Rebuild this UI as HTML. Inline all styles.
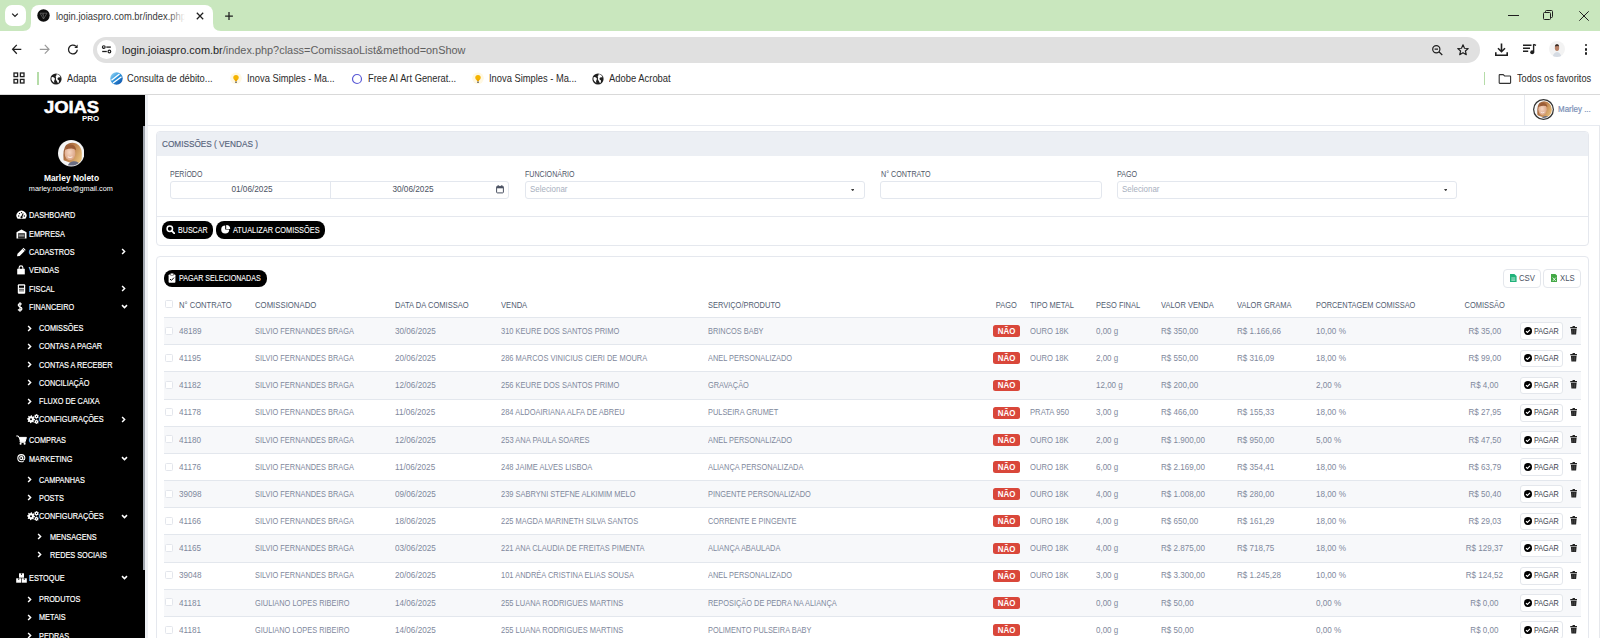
<!DOCTYPE html><html><head><meta charset="utf-8"><title>Comissões</title><style>
*{margin:0;padding:0;box-sizing:border-box}
html,body{width:1600px;height:638px;overflow:hidden;background:#fff;font-family:"Liberation Sans",sans-serif;position:relative}
.a{position:absolute}
.t{position:absolute;white-space:nowrap;line-height:1}
.inp{position:absolute;border:1px solid #e3e7ee;border-radius:3px;background:#fff}
.btn{position:absolute;background:#000;border-radius:8px}
.cb{position:absolute;width:8px;height:8px;border:1px solid #e3e6ec;border-radius:1.5px;background:#fff}
.badge{position:absolute;width:27px;height:11.8px;background:#d9473a;border-radius:2.5px}
.pg{position:absolute;width:43px;height:18px;border:1px solid #e4e7ec;border-radius:3px;background:#fff}
</style></head><body>
<div class="a" style="left:0;top:0;width:1600px;height:31px;background:#c9e7be"></div>
<div class="a" style="left:5px;top:5px;width:21px;height:21px;background:#fff;border-radius:7px"></div>
<svg class="a" style="left:10px;top:11px" width="10" height="8" viewBox="0 0 10 8"><path d="M2.2 2.6 L5 5.4 L7.8 2.6" fill="none" stroke="#1f1f1f" stroke-width="1.3"/></svg>
<div class="a" style="left:31px;top:5px;width:182px;height:27px;background:#fff;border-radius:8px 8px 0 0"></div>
<svg class="a" style="left:23px;top:23px" width="8" height="8"><path d="M0 8 Q8 8 8 0 L8 8 Z" fill="#fff"/></svg>
<svg class="a" style="left:213px;top:23px" width="8" height="8"><path d="M8 8 Q0 8 0 0 L0 8 Z" fill="#fff"/></svg>
<svg class="a" style="left:36.8px;top:9px" width="13" height="13" viewBox="0 0 13 13"><circle cx="6.5" cy="6.5" r="6.2" fill="#0d0d0d"/><path d="M3 4.2 H10 L6.5 10 Z" fill="none" stroke="#6b6b6b" stroke-width="0.7"/><path d="M6.5 4.2 V10 M4.8 4.2 L6.5 7" stroke="#6b6b6b" stroke-width="0.5"/></svg>
<div class="t" style="left:56.00px;top:12px;font-size:10.2px;color:#3a3a3a;transform:scaleX(0.922);transform-origin:0 0;">login.joiaspro.com.br/index.php</div>
<div class="a" style="left:168px;top:8px;width:20px;height:20px;background:linear-gradient(to right,rgba(255,255,255,0),#fff 85%)"></div>
<svg class="a" style="left:195px;top:10.7px" width="10" height="10" viewBox="0 0 10 10"><path d="M1.8 1.8 L8.2 8.2 M8.2 1.8 L1.8 8.2" stroke="#1f1f1f" stroke-width="1.25"/></svg>
<svg class="a" style="left:222.8px;top:9.9px" width="12" height="12" viewBox="0 0 12 12"><path d="M6 2.1 V9.9 M2.1 6 H9.9" stroke="#1f1f1f" stroke-width="1.25"/></svg>
<div class="a" style="left:1508px;top:14.5px;width:11px;height:1px;background:#1f1f1f"></div>
<svg class="a" style="left:1542px;top:9px" width="12" height="12" viewBox="0 0 12 12"><rect x="1.5" y="3.5" width="7" height="7" rx="1" fill="none" stroke="#1f1f1f" stroke-width="1"/><path d="M3.5 3.5 V2.5 Q3.5 1.5 4.5 1.5 H9.5 Q10.5 1.5 10.5 2.5 V7.5 Q10.5 8.5 9.5 8.5 H8.5" fill="none" stroke="#1f1f1f" stroke-width="1"/></svg>
<svg class="a" style="left:1578px;top:9.5px" width="12" height="12" viewBox="0 0 12 12"><path d="M1.3 1.3 L10.7 10.7 M10.7 1.3 L1.3 10.7" stroke="#1f1f1f" stroke-width="1"/></svg>
<div class="a" style="left:0;top:31px;width:1600px;height:32px;background:#fff;border-radius:6px 0 0 0"></div>
<svg class="a" style="left:10px;top:42px" width="14" height="14" viewBox="0 0 14 14"><path d="M11.3 7.3 H2.6 M6.8 2.9 L2.6 7.3 L6.8 11.7" fill="none" stroke="#1f1f1f" stroke-width="1.25"/></svg>
<svg class="a" style="left:38px;top:42px" width="14" height="14" viewBox="0 0 14 14"><path d="M1.8 7.3 H10.8 M6.8 2.9 L11 7.3 L6.8 11.7" fill="none" stroke="#9a9a9a" stroke-width="1.2"/></svg>
<svg class="a" style="left:66px;top:42px" width="14" height="14" viewBox="0 0 14 14"><path d="M11.3 7.8 A4.4 4.4 0 1 1 9.9 4.3" fill="none" stroke="#1f1f1f" stroke-width="1.3"/><path d="M11.6 2.6 V5.9 H8.3 Z" fill="#1f1f1f"/></svg>
<div class="a" style="left:93.2px;top:36.5px;width:1387.3px;height:26px;background:#e0e0e0;border-radius:13px"></div>
<div class="a" style="left:97.2px;top:40.2px;width:18.6px;height:18.6px;background:#fff;border-radius:50%"></div>
<svg class="a" style="left:100px;top:43px" width="13" height="13" viewBox="0 0 13 13"><circle cx="3.8" cy="4.1" r="1.35" fill="none" stroke="#1f1f1f" stroke-width="1.2"/><path d="M6.3 4.1 H10.8" stroke="#1f1f1f" stroke-width="1.3"/><path d="M2.2 8.5 H6.8" stroke="#1f1f1f" stroke-width="1.3"/><circle cx="9.4" cy="8.5" r="1.35" fill="none" stroke="#1f1f1f" stroke-width="1.2"/></svg>
<div class="t" style="left:122.4px;top:43.6px;font-size:11.7px;color:#5f5f5f;transform:scaleX(0.934);transform-origin:0 0"><span style="color:#1f1f1f">login.joiaspro.com.br</span>/index.php?class=ComissaoList&amp;method=onShow</div>
<svg class="a" style="left:1430px;top:42px" width="14" height="14" viewBox="0 0 14 14"><circle cx="6.3" cy="7.2" r="3.6" fill="none" stroke="#1f1f1f" stroke-width="1.2"/><path d="M8.9 9.8 L12.3 13 M4.6 7.2 H8" stroke="#1f1f1f" stroke-width="1.2"/></svg>
<svg class="a" style="left:1455.5px;top:43px" width="14" height="14" viewBox="0 0 14 14"><path d="M7 1.8 L8.5 5.2 L12.2 5.5 L9.4 8 L10.3 11.7 L7 9.7 L3.7 11.7 L4.6 8 L1.8 5.5 L5.5 5.2 Z" fill="none" stroke="#1f1f1f" stroke-width="1.15" stroke-linejoin="round"/></svg>
<svg class="a" style="left:1494px;top:41.5px" width="15" height="15" viewBox="0 0 15 15"><path d="M7.5 1.5 V9.5 M4 6.2 L7.5 9.7 L11 6.2" fill="none" stroke="#1f1f1f" stroke-width="1.6"/><path d="M1.8 10.2 V13.2 H13.2 V10.2" fill="none" stroke="#1f1f1f" stroke-width="1.6"/></svg>
<svg class="a" style="left:1522px;top:42px" width="15" height="14" viewBox="0 0 15 14"><path d="M1 3.2 H9.5 M1 6.2 H8 M1 9.2 H6.2" stroke="#1f1f1f" stroke-width="1.4"/><path d="M11.6 2.2 V10" stroke="#1f1f1f" stroke-width="1.4"/><circle cx="10.2" cy="10.3" r="2" fill="#1f1f1f"/><path d="M11.6 2.4 L14 3.4" stroke="#1f1f1f" stroke-width="1.4"/></svg>
<svg class="a" style="left:1549px;top:41px" width="16" height="16" viewBox="0 0 16 16"><defs><clipPath id="pc"><circle cx="8" cy="8" r="8"/></clipPath></defs><g clip-path="url(#pc)"><rect width="16" height="16" fill="#f3f3f3"/><path d="M3.5 17 Q4 11.5 8 11 Q12 11.5 12.5 17 Z" fill="#d5dbe3"/><ellipse cx="8" cy="7" rx="2.2" ry="3" fill="#b98268"/><path d="M5.8 5.6 Q6 3 8 3 Q10 3 10.2 5.6 Q9 4.6 5.8 5.6 Z" fill="#3a2a22"/></g></svg>
<div class="a" style="left:1584.5500000000002px;top:43.75px;width:2.7px;height:2.7px;border-radius:50%;background:#1f1f1f"></div>
<div class="a" style="left:1584.5500000000002px;top:48.05px;width:2.7px;height:2.7px;border-radius:50%;background:#1f1f1f"></div>
<div class="a" style="left:1584.5500000000002px;top:52.35px;width:2.7px;height:2.7px;border-radius:50%;background:#1f1f1f"></div>
<div class="a" style="left:0;top:63px;width:1600px;height:31px;background:#fff"></div>
<div class="a" style="left:0;top:94px;width:1600px;height:1px;background:#d9d9d9"></div>
<svg class="a" style="left:13px;top:72px" width="12" height="12" viewBox="0 0 12 12"><g fill="none" stroke="#1f1f1f" stroke-width="1.3"><rect x="1" y="1" width="3.6" height="3.6"/><rect x="7.4" y="1" width="3.6" height="3.6"/><rect x="1" y="7.4" width="3.6" height="3.6"/><rect x="7.4" y="7.4" width="3.6" height="3.6"/></g></svg>
<div class="a" style="left:37.3px;top:72px;width:1.4px;height:12.5px;background:#b5dca8"></div>
<svg class="a" style="left:50px;top:72.5px" width="12" height="12" viewBox="0 0 12 12"><circle cx="6" cy="6" r="5.6" fill="#1f1f1f"/><path d="M1.6 4.2 Q3.2 3.8 4.6 5 Q5.4 6 4.4 7.2 Q3.8 8.2 4.3 10 Q2 8.8 1.4 6.2 Z" fill="#fff"/><path d="M6.8 1.1 Q9.6 1.6 10.6 4.2 Q9.2 4 8.2 4.6 Q7.2 5.2 7.6 6.4 Q8.6 6.6 9 7.6 Q9.2 9 8.2 10.3 Q7.2 9.4 7 8.2 Q6.2 7.4 5.8 6 Q6.6 4.8 5.6 3.8 Q6.4 2.6 6.8 1.1 Z" fill="#fff"/></svg>
<div class="t" style="left:66.80px;top:74px;font-size:10.3px;color:#2b2b2b;transform:scaleX(0.903);transform-origin:0 0;">Adapta</div>
<svg class="a" style="left:109.5px;top:72px" width="13" height="13" viewBox="0 0 13 13"><defs><linearGradient id="cg" x1="0" y1="0" x2="1" y2="1"><stop offset="0" stop-color="#a8e2fa"/><stop offset="0.5" stop-color="#2a8fd8"/><stop offset="1" stop-color="#0d47a1"/></linearGradient></defs><circle cx="6.5" cy="6.5" r="6.2" fill="url(#cg)"/><path d="M1.5 8.2 L9.5 2 M3 11 L11.5 4.8" stroke="#fff" stroke-width="1.4"/></svg>
<div class="t" style="left:126.90px;top:74px;font-size:10.3px;color:#2b2b2b;transform:scaleX(0.906);transform-origin:0 0;">Consulta de débito...</div>
<svg class="a" style="left:230px;top:72px" width="12" height="13" viewBox="0 0 12 13"><circle cx="6" cy="6.3" r="5.8" fill="#fff8e3"/><circle cx="6" cy="5.6" r="2.7" fill="#f5b400"/><path d="M4.6 7 H7.4 L7 9.3 H5 Z" fill="#f0a800"/><rect x="5" y="9.6" width="2" height="1.2" fill="#666"/></svg>
<div class="t" style="left:247.00px;top:74px;font-size:10.3px;color:#2b2b2b;transform:scaleX(0.906);transform-origin:0 0;">Inova Simples - Ma...</div>
<svg class="a" style="left:351px;top:72.5px" width="12" height="12" viewBox="0 0 12 12"><circle cx="6" cy="6" r="4.5" fill="none" stroke="#5b5bd6" stroke-width="1.2"/></svg>
<div class="t" style="left:368.00px;top:74px;font-size:10.3px;color:#2b2b2b;transform:scaleX(0.906);transform-origin:0 0;">Free AI Art Generat...</div>
<svg class="a" style="left:472px;top:72px" width="12" height="13" viewBox="0 0 12 13"><circle cx="6" cy="6.3" r="5.8" fill="#fff8e3"/><circle cx="6" cy="5.6" r="2.7" fill="#f5b400"/><path d="M4.6 7 H7.4 L7 9.3 H5 Z" fill="#f0a800"/><rect x="5" y="9.6" width="2" height="1.2" fill="#666"/></svg>
<div class="t" style="left:489.00px;top:74px;font-size:10.3px;color:#2b2b2b;transform:scaleX(0.906);transform-origin:0 0;">Inova Simples - Ma...</div>
<svg class="a" style="left:592px;top:72.5px" width="12" height="12" viewBox="0 0 12 12"><circle cx="6" cy="6" r="5.6" fill="#1f1f1f"/><path d="M1.6 4.2 Q3.2 3.8 4.6 5 Q5.4 6 4.4 7.2 Q3.8 8.2 4.3 10 Q2 8.8 1.4 6.2 Z" fill="#fff"/><path d="M6.8 1.1 Q9.6 1.6 10.6 4.2 Q9.2 4 8.2 4.6 Q7.2 5.2 7.6 6.4 Q8.6 6.6 9 7.6 Q9.2 9 8.2 10.3 Q7.2 9.4 7 8.2 Q6.2 7.4 5.8 6 Q6.6 4.8 5.6 3.8 Q6.4 2.6 6.8 1.1 Z" fill="#fff"/></svg>
<div class="t" style="left:609.00px;top:74px;font-size:10.3px;color:#2b2b2b;transform:scaleX(0.913);transform-origin:0 0;">Adobe Acrobat</div>
<div class="a" style="left:1484px;top:72px;width:1.4px;height:12.5px;background:#b5dca8"></div>
<svg class="a" style="left:1497.5px;top:73px" width="14" height="12" viewBox="0 0 14 12"><path d="M1.8 1.6 H5.2 L6.6 3 H12 Q12.6 3 12.6 3.6 V9.8 Q12.6 10.4 12 10.4 H1.8 Q1.2 10.4 1.2 9.8 V2.2 Q1.2 1.6 1.8 1.6 Z" fill="none" stroke="#333" stroke-width="1.1"/></svg>
<div class="t" style="left:1517.00px;top:74px;font-size:10.3px;color:#2b2b2b;transform:scaleX(0.893);transform-origin:0 0;">Todos os favoritos</div>
<div class="a" style="left:0;top:95px;width:145px;height:543px;background:#000"></div>
<div class="a" style="left:143px;top:126px;width:2.4px;height:444px;background:#a3a8b0"></div>
<div class="a" style="left:145px;top:95px;width:2.5px;height:543px;background:#eef0f4"></div>
<div class="t" style="left:43.8px;top:100px;font-size:15.8px;font-weight:bold;color:#fff;transform:scaleX(1.17);transform-origin:0 0;letter-spacing:-0.1px;-webkit-text-stroke:0.45px #fff">JOIAS</div>
<div class="t" style="left:82.40px;top:115px;font-size:7.8px;color:#fff;font-weight:bold;transform:scaleX(1.013);transform-origin:0 0;">PRO</div>
<svg class="a" style="left:58.099999999999994px;top:140.3px" width="26.4" height="26.4" viewBox="0 0 26 26"><defs><clipPath id="fcs"><circle cx="13" cy="13" r="12.2"/></clipPath><linearGradient id="hgs" x1="0" y1="0" x2="1" y2="0.6"><stop offset="0" stop-color="#8a4f2e"/><stop offset="0.45" stop-color="#b87a48"/><stop offset="1" stop-color="#e6bd7a"/></linearGradient><radialGradient id="sks" cx="0.45" cy="0.45" r="0.6"><stop offset="0" stop-color="#f6d6c2"/><stop offset="1" stop-color="#d9a283"/></radialGradient></defs><circle cx="13" cy="13" r="13" fill="#e8e8e8"/><circle cx="13" cy="13" r="12.2" fill="#fff"/><g clip-path="url(#fcs)"><rect width="26" height="26" fill="#f5f5f5"/><path d="M5.5 20 Q4.5 9 8 5 Q12.5 1.5 18 3.5 Q23.5 6.5 23.5 13 Q24 19 22 24 L16 24 Z" fill="url(#hgs)"/><ellipse cx="11.8" cy="12.8" rx="5.3" ry="7.2" fill="url(#sks)"/><path d="M7 9.5 Q8.5 4.5 13.5 4.8 Q17.5 5.5 17.8 10 Q15 7 7 9.5 Z" fill="#9b5c36"/><path d="M9.6 16.3 Q11.8 18 14.2 16.3" stroke="#fbeee6" stroke-width="1" fill="none"/><path d="M9 27 Q10.5 21.5 15 21 Q21 20.5 23.5 27 Z" fill="#6a6d82"/></g></svg>
<div class="t" style="left:42.98px;top:174px;font-size:8.7px;color:#fff;font-weight:bold;transform:scaleX(0.968);transform-origin:50% 0;">Marley Noleto</div>
<div class="t" style="left:26.15px;top:185px;font-size:7.8px;color:#fff;transform:scaleX(0.936);transform-origin:50% 0;">marley.noleto@gmail.com</div>
<svg class="a" style="left:15.5px;top:210.3px" width="11" height="10" viewBox="0 0 11 10"><path d="M1.6 8.8 A5 5 0 1 1 9.4 8.8 Z" fill="#fff"/><path d="M5.5 7.2 L7.2 3.4" stroke="#000" stroke-width="1.1"/><circle cx="2.7" cy="6" r="0.7" fill="#000"/><circle cx="3.5" cy="3.6" r="0.7" fill="#000"/><circle cx="5.5" cy="2.6" r="0.7" fill="#000"/><circle cx="8.3" cy="6" r="0.7" fill="#000"/><circle cx="5.5" cy="7.3" r="1.1" fill="#000"/></svg>
<div class="t" style="left:28.60px;top:211px;font-size:8.6px;color:#fff;transform:scaleX(0.851);transform-origin:0 0;-webkit-text-stroke:0.18px #fff">DASHBOARD</div>
<svg class="a" style="left:15.5px;top:228.5px" width="11" height="10" viewBox="0 0 11 10"><path d="M0.5 3.2 L5.5 0.6 L10.5 3.2 V9.5 H0.5 Z" fill="#fff"/><rect x="2.2" y="4.2" width="6.6" height="5.3" fill="#000"/><path d="M2.6 5.2 H8.4 M2.6 6.5 H8.4 M2.6 7.8 H8.4" stroke="#c8c8c8" stroke-width="0.7"/></svg>
<div class="t" style="left:28.60px;top:230px;font-size:8.6px;color:#fff;transform:scaleX(0.851);transform-origin:0 0;-webkit-text-stroke:0.18px #fff">EMPRESA</div>
<svg class="a" style="left:15.5px;top:246.8px" width="11" height="10" viewBox="0 0 11 10"><path d="M1 9.3 L1.5 6.8 L7.5 0.8 L9.7 3 L3.7 9 Z" fill="#fff"/><path d="M6.6 1.7 L8.8 3.9" stroke="#000" stroke-width="0.6"/></svg>
<div class="t" style="left:28.60px;top:248px;font-size:8.6px;color:#fff;transform:scaleX(0.851);transform-origin:0 0;-webkit-text-stroke:0.18px #fff">CADASTROS</div>
<svg class="a" style="left:121.2px;top:248.3px" width="5" height="7" viewBox="0 0 5 7"><path d="M1.1 1 L3.6 3.5 L1.1 6" fill="none" stroke="#fff" stroke-width="1.5"/></svg>
<svg class="a" style="left:15.5px;top:265.1px" width="11" height="10" viewBox="0 0 11 10"><path d="M1.2 3.8 H8.8 V9.4 H1.2 Z" fill="#fff"/><path d="M3.1 4.5 V2.8 A1.9 1.9 0 0 1 6.9 2.8 V4.5" fill="none" stroke="#fff" stroke-width="1.1"/></svg>
<div class="t" style="left:28.60px;top:266px;font-size:8.6px;color:#fff;transform:scaleX(0.851);transform-origin:0 0;-webkit-text-stroke:0.18px #fff">VENDAS</div>
<svg class="a" style="left:15.5px;top:283.5px" width="11" height="10" viewBox="0 0 11 10"><rect x="1.8" y="0.3" width="7.4" height="9.4" rx="1" fill="#fff"/><rect x="3" y="1.6" width="5" height="2.2" fill="#000"/><path d="M3 5.3 H8 M3 6.9 H8" stroke="#000" stroke-width="0.7"/></svg>
<div class="t" style="left:28.60px;top:285px;font-size:8.6px;color:#fff;transform:scaleX(0.851);transform-origin:0 0;-webkit-text-stroke:0.18px #fff">FISCAL</div>
<svg class="a" style="left:121.2px;top:285.0px" width="5" height="7" viewBox="0 0 5 7"><path d="M1.1 1 L3.6 3.5 L1.1 6" fill="none" stroke="#fff" stroke-width="1.5"/></svg>
<svg class="a" style="left:15.5px;top:301.7px" width="11" height="10" viewBox="0 0 11 10"><path d="M5.6 2.4 Q5.1 1.7 4 1.7 Q2.2 1.8 2.3 3.3 Q2.4 4.5 4 4.9 Q5.9 5.4 5.9 6.9 Q5.8 8.4 4 8.4 Q2.8 8.4 2 7.5 M4 0.3 V9.7" fill="none" stroke="#fff" stroke-width="1.25"/></svg>
<div class="t" style="left:28.60px;top:303px;font-size:8.6px;color:#fff;transform:scaleX(0.851);transform-origin:0 0;-webkit-text-stroke:0.18px #fff">FINANCEIRO</div>
<svg class="a" style="left:120.5px;top:304.2px" width="7" height="5" viewBox="0 0 7 5"><path d="M1 1.1 L3.5 3.6 L6 1.1" fill="none" stroke="#fff" stroke-width="1.5"/></svg>
<svg class="a" style="left:27.3px;top:324.5px" width="5" height="7" viewBox="0 0 5 7"><path d="M1.1 1 L3.6 3.5 L1.1 6" fill="none" stroke="#fff" stroke-width="1.5"/></svg>
<div class="t" style="left:38.80px;top:324px;font-size:8.6px;color:#fff;transform:scaleX(0.851);transform-origin:0 0;-webkit-text-stroke:0.18px #fff">COMISSÕES</div>
<svg class="a" style="left:27.3px;top:342.8px" width="5" height="7" viewBox="0 0 5 7"><path d="M1.1 1 L3.6 3.5 L1.1 6" fill="none" stroke="#fff" stroke-width="1.5"/></svg>
<div class="t" style="left:38.80px;top:342px;font-size:8.6px;color:#fff;transform:scaleX(0.851);transform-origin:0 0;-webkit-text-stroke:0.18px #fff">CONTAS A PAGAR</div>
<svg class="a" style="left:27.3px;top:361.0px" width="5" height="7" viewBox="0 0 5 7"><path d="M1.1 1 L3.6 3.5 L1.1 6" fill="none" stroke="#fff" stroke-width="1.5"/></svg>
<div class="t" style="left:38.80px;top:361px;font-size:8.6px;color:#fff;transform:scaleX(0.851);transform-origin:0 0;-webkit-text-stroke:0.18px #fff">CONTAS A RECEBER</div>
<svg class="a" style="left:27.3px;top:379.2px" width="5" height="7" viewBox="0 0 5 7"><path d="M1.1 1 L3.6 3.5 L1.1 6" fill="none" stroke="#fff" stroke-width="1.5"/></svg>
<div class="t" style="left:38.80px;top:379px;font-size:8.6px;color:#fff;transform:scaleX(0.851);transform-origin:0 0;-webkit-text-stroke:0.18px #fff">CONCILIAÇÃO</div>
<svg class="a" style="left:27.3px;top:397.5px" width="5" height="7" viewBox="0 0 5 7"><path d="M1.1 1 L3.6 3.5 L1.1 6" fill="none" stroke="#fff" stroke-width="1.5"/></svg>
<div class="t" style="left:38.80px;top:397px;font-size:8.6px;color:#fff;transform:scaleX(0.851);transform-origin:0 0;-webkit-text-stroke:0.18px #fff">FLUXO DE CAIXA</div>
<svg class="a" style="left:26.5px;top:414.2px" width="12" height="10" viewBox="0 0 12 10"><path d="M4.00 1.20 L4.78 1.28 L5.15 2.43 L5.67 2.71 L6.83 2.37 L7.33 2.98 L6.77 4.05 L6.94 4.61 L8.00 5.20 L7.92 5.98 L6.77 6.35 L6.49 6.87 L6.83 8.03 L6.22 8.53 L5.15 7.97 L4.59 8.14 L4.00 9.20 L3.22 9.12 L2.85 7.97 L2.33 7.69 L1.17 8.03 L0.67 7.42 L1.23 6.35 L1.06 5.79 L0.00 5.20 L0.08 4.42 L1.23 4.05 L1.51 3.53 L1.17 2.37 L1.78 1.87 L2.85 2.43 L3.41 2.26 Z" fill="#fff"/><circle cx="4.0" cy="5.2" r="1.0" fill="#000"/><path d="M9.50 0.00 L10.12 0.08 L10.40 0.84 L10.77 1.13 L11.58 1.20 L11.82 1.78 L11.30 2.40 L11.24 2.87 L11.58 3.60 L11.20 4.10 L10.40 3.96 L9.97 4.14 L9.50 4.80 L8.88 4.72 L8.60 3.96 L8.23 3.67 L7.42 3.60 L7.18 3.02 L7.70 2.40 L7.76 1.93 L7.42 1.20 L7.80 0.70 L8.60 0.84 L9.03 0.66 Z" fill="#fff"/><circle cx="9.5" cy="2.4" r="0.55" fill="#000"/><path d="M9.50 5.50 L10.10 5.58 L10.35 6.33 L10.70 6.60 L11.49 6.65 L11.72 7.20 L11.20 7.80 L11.14 8.24 L11.49 8.95 L11.13 9.43 L10.35 9.27 L9.94 9.44 L9.50 10.10 L8.90 10.02 L8.65 9.27 L8.30 9.00 L7.51 8.95 L7.28 8.40 L7.80 7.80 L7.86 7.36 L7.51 6.65 L7.87 6.17 L8.65 6.33 L9.06 6.16 Z" fill="#fff"/><circle cx="9.5" cy="7.8" r="0.5" fill="#000"/></svg>
<div class="t" style="left:38.80px;top:415px;font-size:8.6px;color:#fff;transform:scaleX(0.851);transform-origin:0 0;-webkit-text-stroke:0.18px #fff">CONFIGURAÇÕES</div>
<svg class="a" style="left:121.2px;top:415.7px" width="5" height="7" viewBox="0 0 5 7"><path d="M1.1 1 L3.6 3.5 L1.1 6" fill="none" stroke="#fff" stroke-width="1.5"/></svg>
<svg class="a" style="left:15.5px;top:435.2px" width="11" height="10" viewBox="0 0 11 10"><path d="M0.3 1 H2.3 L2.8 2.4 H10.4 L9.2 6.6 H3.9 L4.2 7.3 H9.4" fill="none" stroke="#fff" stroke-width="1"/><path d="M2.8 2.4 H10.4 L9.2 6.6 H3.9 Z" fill="#fff"/><circle cx="4.6" cy="8.8" r="1.05" fill="#fff"/><circle cx="8.6" cy="8.8" r="1.05" fill="#fff"/></svg>
<div class="t" style="left:28.60px;top:436px;font-size:8.6px;color:#fff;transform:scaleX(0.851);transform-origin:0 0;-webkit-text-stroke:0.18px #fff">COMPRAS</div>
<svg class="a" style="left:15.5px;top:453.4px" width="11" height="10" viewBox="0 0 11 10"><path d="M7.6 8.2 Q6.6 8.8 5.3 8.8 Q1.9 8.7 1.8 5.2 Q1.9 1.7 5.3 1.6 Q8.7 1.7 8.8 4.9 Q8.8 7 7.5 7 Q6.7 7 6.7 6.1 V3.4" fill="none" stroke="#fff" stroke-width="1.1"/><circle cx="5.2" cy="5.1" r="1.5" fill="none" stroke="#fff" stroke-width="1.1"/></svg>
<div class="t" style="left:28.60px;top:455px;font-size:8.6px;color:#fff;transform:scaleX(0.851);transform-origin:0 0;-webkit-text-stroke:0.18px #fff">MARKETING</div>
<svg class="a" style="left:120.5px;top:455.9px" width="7" height="5" viewBox="0 0 7 5"><path d="M1 1.1 L3.5 3.6 L6 1.1" fill="none" stroke="#fff" stroke-width="1.5"/></svg>
<svg class="a" style="left:27.3px;top:476.1px" width="5" height="7" viewBox="0 0 5 7"><path d="M1.1 1 L3.6 3.5 L1.1 6" fill="none" stroke="#fff" stroke-width="1.5"/></svg>
<div class="t" style="left:38.80px;top:476px;font-size:8.6px;color:#fff;transform:scaleX(0.851);transform-origin:0 0;-webkit-text-stroke:0.18px #fff">CAMPANHAS</div>
<svg class="a" style="left:27.3px;top:494.3px" width="5" height="7" viewBox="0 0 5 7"><path d="M1.1 1 L3.6 3.5 L1.1 6" fill="none" stroke="#fff" stroke-width="1.5"/></svg>
<div class="t" style="left:38.80px;top:494px;font-size:8.6px;color:#fff;transform:scaleX(0.851);transform-origin:0 0;-webkit-text-stroke:0.18px #fff">POSTS</div>
<svg class="a" style="left:26.5px;top:511.0px" width="12" height="10" viewBox="0 0 12 10"><path d="M4.00 1.20 L4.78 1.28 L5.15 2.43 L5.67 2.71 L6.83 2.37 L7.33 2.98 L6.77 4.05 L6.94 4.61 L8.00 5.20 L7.92 5.98 L6.77 6.35 L6.49 6.87 L6.83 8.03 L6.22 8.53 L5.15 7.97 L4.59 8.14 L4.00 9.20 L3.22 9.12 L2.85 7.97 L2.33 7.69 L1.17 8.03 L0.67 7.42 L1.23 6.35 L1.06 5.79 L0.00 5.20 L0.08 4.42 L1.23 4.05 L1.51 3.53 L1.17 2.37 L1.78 1.87 L2.85 2.43 L3.41 2.26 Z" fill="#fff"/><circle cx="4.0" cy="5.2" r="1.0" fill="#000"/><path d="M9.50 0.00 L10.12 0.08 L10.40 0.84 L10.77 1.13 L11.58 1.20 L11.82 1.78 L11.30 2.40 L11.24 2.87 L11.58 3.60 L11.20 4.10 L10.40 3.96 L9.97 4.14 L9.50 4.80 L8.88 4.72 L8.60 3.96 L8.23 3.67 L7.42 3.60 L7.18 3.02 L7.70 2.40 L7.76 1.93 L7.42 1.20 L7.80 0.70 L8.60 0.84 L9.03 0.66 Z" fill="#fff"/><circle cx="9.5" cy="2.4" r="0.55" fill="#000"/><path d="M9.50 5.50 L10.10 5.58 L10.35 6.33 L10.70 6.60 L11.49 6.65 L11.72 7.20 L11.20 7.80 L11.14 8.24 L11.49 8.95 L11.13 9.43 L10.35 9.27 L9.94 9.44 L9.50 10.10 L8.90 10.02 L8.65 9.27 L8.30 9.00 L7.51 8.95 L7.28 8.40 L7.80 7.80 L7.86 7.36 L7.51 6.65 L7.87 6.17 L8.65 6.33 L9.06 6.16 Z" fill="#fff"/><circle cx="9.5" cy="7.8" r="0.5" fill="#000"/></svg>
<div class="t" style="left:38.80px;top:512px;font-size:8.6px;color:#fff;transform:scaleX(0.851);transform-origin:0 0;-webkit-text-stroke:0.18px #fff">CONFIGURAÇÕES</div>
<svg class="a" style="left:120.5px;top:513.5px" width="7" height="5" viewBox="0 0 7 5"><path d="M1 1.1 L3.5 3.6 L6 1.1" fill="none" stroke="#fff" stroke-width="1.5"/></svg>
<svg class="a" style="left:37.3px;top:533.1px" width="5" height="7" viewBox="0 0 5 7"><path d="M1.1 1 L3.6 3.5 L1.1 6" fill="none" stroke="#fff" stroke-width="1.5"/></svg>
<div class="t" style="left:49.80px;top:533px;font-size:8.6px;color:#fff;transform:scaleX(0.851);transform-origin:0 0;-webkit-text-stroke:0.18px #fff">MENSAGENS</div>
<svg class="a" style="left:37.3px;top:551.3px" width="5" height="7" viewBox="0 0 5 7"><path d="M1.1 1 L3.6 3.5 L1.1 6" fill="none" stroke="#fff" stroke-width="1.5"/></svg>
<div class="t" style="left:49.80px;top:551px;font-size:8.6px;color:#fff;transform:scaleX(0.851);transform-origin:0 0;-webkit-text-stroke:0.18px #fff">REDES SOCIAIS</div>
<svg class="a" style="left:15.5px;top:572.5px" width="11" height="10" viewBox="0 0 11 10"><rect x="0.2" y="5.3" width="5" height="4.4" fill="#fff"/><rect x="5.8" y="5.3" width="5" height="4.4" fill="#fff"/><rect x="3" y="0.3" width="5" height="4.4" fill="#fff"/><path d="M2.7 5.3 V7 M8.3 5.3 V7 M5.5 0.3 V2" stroke="#000" stroke-width="0.8"/></svg>
<div class="t" style="left:28.60px;top:574px;font-size:8.6px;color:#fff;transform:scaleX(0.851);transform-origin:0 0;-webkit-text-stroke:0.18px #fff">ESTOQUE</div>
<svg class="a" style="left:120.5px;top:575.0px" width="7" height="5" viewBox="0 0 7 5"><path d="M1 1.1 L3.5 3.6 L6 1.1" fill="none" stroke="#fff" stroke-width="1.5"/></svg>
<svg class="a" style="left:27.3px;top:595.5px" width="5" height="7" viewBox="0 0 5 7"><path d="M1.1 1 L3.6 3.5 L1.1 6" fill="none" stroke="#fff" stroke-width="1.5"/></svg>
<div class="t" style="left:38.80px;top:595px;font-size:8.6px;color:#fff;transform:scaleX(0.851);transform-origin:0 0;-webkit-text-stroke:0.18px #fff">PRODUTOS</div>
<svg class="a" style="left:27.3px;top:613.7px" width="5" height="7" viewBox="0 0 5 7"><path d="M1.1 1 L3.6 3.5 L1.1 6" fill="none" stroke="#fff" stroke-width="1.5"/></svg>
<div class="t" style="left:38.80px;top:613px;font-size:8.6px;color:#fff;transform:scaleX(0.851);transform-origin:0 0;-webkit-text-stroke:0.18px #fff">METAIS</div>
<svg class="a" style="left:27.3px;top:632.0px" width="5" height="7" viewBox="0 0 5 7"><path d="M1.1 1 L3.6 3.5 L1.1 6" fill="none" stroke="#fff" stroke-width="1.5"/></svg>
<div class="t" style="left:38.80px;top:632px;font-size:8.6px;color:#fff;transform:scaleX(0.851);transform-origin:0 0;-webkit-text-stroke:0.18px #fff">PEDRAS</div>
<div class="a" style="left:147px;top:125px;width:1453px;height:1px;background:#e7eaf0"></div>
<div class="a" style="left:1524px;top:95px;width:1px;height:30px;background:#e7eaf0"></div>
<svg class="a" style="left:1532.9px;top:99.3px" width="21.0" height="21.0" viewBox="0 0 26 26"><defs><clipPath id="fcn"><circle cx="13" cy="13" r="10.4"/></clipPath><linearGradient id="hgn" x1="0" y1="0" x2="1" y2="0.6"><stop offset="0" stop-color="#8a4f2e"/><stop offset="0.45" stop-color="#b87a48"/><stop offset="1" stop-color="#e6bd7a"/></linearGradient><radialGradient id="skn" cx="0.45" cy="0.45" r="0.6"><stop offset="0" stop-color="#f6d6c2"/><stop offset="1" stop-color="#d9a283"/></radialGradient></defs><circle cx="13" cy="13" r="13" fill="#333"/><circle cx="13" cy="13" r="11.4" fill="#fff"/><g clip-path="url(#fcn)"><rect width="26" height="26" fill="#f5f5f5"/><path d="M5.5 20 Q4.5 9 8 5 Q12.5 1.5 18 3.5 Q23.5 6.5 23.5 13 Q24 19 22 24 L16 24 Z" fill="url(#hgn)"/><ellipse cx="11.8" cy="12.8" rx="5.3" ry="7.2" fill="url(#skn)"/><path d="M7 9.5 Q8.5 4.5 13.5 4.8 Q17.5 5.5 17.8 10 Q15 7 7 9.5 Z" fill="#9b5c36"/><path d="M9.6 16.3 Q11.8 18 14.2 16.3" stroke="#fbeee6" stroke-width="1" fill="none"/><path d="M9 27 Q10.5 21.5 15 21 Q21 20.5 23.5 27 Z" fill="#6a6d82"/></g></svg>
<div class="t" style="left:1558.00px;top:105px;font-size:8.6px;color:#7a8fb6;transform:scaleX(0.928);transform-origin:0 0;-webkit-text-stroke:0.2px #7a8fb6">Marley ...</div>
<div class="a" style="left:1599px;top:126px;width:1px;height:512px;background:#e6e8ec"></div>
<div class="a" style="left:156px;top:131px;width:1433px;height:114.5px;border:1px solid #e5e8ee;border-radius:4px;background:#fff;overflow:hidden"><div class="a" style="left:0;top:0;width:1431px;height:24px;background:#eceff4"></div><div class="a" style="left:0;top:83.6px;width:1431px;height:1px;background:#e5e8ee"></div></div>
<div class="t" style="left:162.00px;top:139px;font-size:9.6px;color:#55627a;transform:scaleX(0.857);transform-origin:0 0;-webkit-text-stroke:0.15px #55627a">COMISSÕES ( VENDAS )</div>
<div class="t" style="left:170.00px;top:170px;font-size:8.4px;color:#4f5769;transform:scaleX(0.839);transform-origin:0 0;">PERÍODO</div>
<div class="t" style="left:525.00px;top:170px;font-size:8.4px;color:#4f5769;transform:scaleX(0.845);transform-origin:0 0;">FUNCIONÁRIO</div>
<div class="t" style="left:880.60px;top:170px;font-size:8.4px;color:#4f5769;transform:scaleX(0.857);transform-origin:0 0;">N° CONTRATO</div>
<div class="t" style="left:1117.00px;top:170px;font-size:8.4px;color:#4f5769;transform:scaleX(0.857);transform-origin:0 0;">PAGO</div>
<div class="inp" style="left:170px;top:180.5px;width:339px;height:18px"></div>
<div class="a" style="left:330px;top:181px;width:1px;height:17px;background:#e3e7ee"></div>
<div class="t" style="left:228.38px;top:184px;font-size:9.6px;color:#4b5262;transform:scaleX(0.858);transform-origin:50% 0;">01/06/2025</div>
<div class="t" style="left:389.08px;top:184px;font-size:9.6px;color:#4b5262;transform:scaleX(0.858);transform-origin:50% 0;">30/06/2025</div>
<svg class="a" style="left:496px;top:185px" width="8" height="8.5" viewBox="0 0 8 8.5"><rect x="0.6" y="1.4" width="6.8" height="6.5" rx="0.8" fill="none" stroke="#4b5262" stroke-width="1"/><rect x="0.6" y="1.4" width="6.8" height="1.9" fill="#4b5262"/><path d="M2.2 0 V1.6 M5.8 0 V1.6" stroke="#4b5262" stroke-width="0.9"/></svg>
<div class="inp" style="left:525px;top:180.5px;width:340px;height:18px"></div>
<div class="t" style="left:530.00px;top:185px;font-size:8.8px;color:#a7afbe;transform:scaleX(0.902);transform-origin:0 0;">Selecionar</div>
<svg class="a" style="left:851px;top:188.5px" width="3.4" height="2.6" viewBox="0 0 4 3"><path d="M0 0 H4 L2 2.8 Z" fill="#3f3f3f"/></svg>
<div class="inp" style="left:880px;top:180.5px;width:221.5px;height:18px"></div>
<div class="inp" style="left:1117px;top:180.5px;width:339.6px;height:18px"></div>
<div class="t" style="left:1122.00px;top:185px;font-size:8.8px;color:#a7afbe;transform:scaleX(0.902);transform-origin:0 0;">Selecionar</div>
<svg class="a" style="left:1443.7px;top:188.5px" width="3.4" height="2.6" viewBox="0 0 4 3"><path d="M0 0 H4 L2 2.8 Z" fill="#3f3f3f"/></svg>
<div class="btn" style="left:161.6px;top:221.2px;width:51.2px;height:18px"></div>
<svg class="a" style="left:166.2px;top:225.4px" width="9" height="9" viewBox="0 0 9 9"><circle cx="3.8" cy="3.8" r="2.7" fill="none" stroke="#fff" stroke-width="1.5"/><path d="M5.8 5.8 L8.3 8.3" stroke="#fff" stroke-width="1.8" stroke-linecap="round"/></svg>
<div class="t" style="left:178.30px;top:226px;font-size:8.4px;color:#fff;transform:scaleX(0.849);transform-origin:0 0;-webkit-text-stroke:0.1px #fff">BUSCAR</div>
<div class="btn" style="left:216px;top:221.2px;width:108.5px;height:18px"></div>
<svg class="a" style="left:220.8px;top:225.4px" width="10" height="9" viewBox="0 0 10 9"><path d="M4.2 0.6 A4 4 0 1 0 8.2 4.6 H4.2 Z" fill="#fff"/><path d="M5.2 0 A4 4 0 0 1 9.2 4 H5.2 Z" fill="#fff"/></svg>
<div class="t" style="left:233.10px;top:226px;font-size:8.4px;color:#fff;transform:scaleX(0.879);transform-origin:0 0;-webkit-text-stroke:0.1px #fff">ATUALIZAR COMISSÕES</div>
<div class="a" style="left:156px;top:256px;width:1433px;height:400px;border:1px solid #e5e8ee;border-radius:4px;background:#fff"></div>
<div class="btn" style="left:164px;top:269.6px;width:102.8px;height:17.8px"></div>
<svg class="a" style="left:168px;top:273px" width="8" height="10" viewBox="0 0 8 10"><rect x="0.6" y="1.4" width="6.8" height="8.4" rx="0.8" fill="#fff"/><rect x="2.4" y="0.2" width="3.2" height="2.2" rx="0.5" fill="#fff" stroke="#000" stroke-width="0.4"/><path d="M2 6 L3.4 7.4 L6 4.6" fill="none" stroke="#000" stroke-width="1"/></svg>
<div class="t" style="left:178.70px;top:274px;font-size:8.4px;color:#fff;transform:scaleX(0.850);transform-origin:0 0;-webkit-text-stroke:0.1px #fff">PAGAR SELECIONADAS</div>
<div class="a" style="left:1503px;top:269.3px;width:37.7px;height:18.4px;border:1px solid #e4e7ec;border-radius:4px;background:#fff"></div>
<svg class="a" style="left:1510px;top:274px" width="6.6" height="8" viewBox="0 0 7 9.5" preserveAspectRatio="none"><path d="M0 0 H4.6 L7 2.4 V9.5 H0 Z" fill="#20b27a"/><path d="M1.4 4.6 H5.6 M1.4 6.1 H5.6 M1.4 7.6 H5.6" stroke="#fff" stroke-width="0.6"/></svg>
<div class="t" style="left:1519.40px;top:274px;font-size:8.6px;color:#4b5262;transform:scaleX(0.905);transform-origin:0 0;">CSV</div>
<div class="a" style="left:1543px;top:269.3px;width:38px;height:18.4px;border:1px solid #e4e7ec;border-radius:4px;background:#fff"></div>
<svg class="a" style="left:1550.5px;top:274px" width="6.6" height="8" viewBox="0 0 7 9.5" preserveAspectRatio="none"><path d="M0 0 H4.6 L7 2.4 V9.5 H0 Z" fill="#42a845"/><path d="M1.8 4.2 L5.2 8.4 M5.2 4.2 L1.8 8.4" stroke="#fff" stroke-width="0.9"/></svg>
<div class="t" style="left:1560.00px;top:274px;font-size:8.6px;color:#4b5262;transform:scaleX(0.895);transform-origin:0 0;">XLS</div>
<div class="cb" style="left:164.5px;top:300px"></div>
<div class="t" style="left:178.60px;top:301px;font-size:8.8px;color:#525d72;transform:scaleX(0.864);transform-origin:0 0;">N° CONTRATO</div>
<div class="t" style="left:255.30px;top:301px;font-size:8.8px;color:#525d72;transform:scaleX(0.883);transform-origin:0 0;">COMISSIONADO</div>
<div class="t" style="left:395.00px;top:301px;font-size:8.8px;color:#525d72;transform:scaleX(0.860);transform-origin:0 0;">DATA DA COMISSAO</div>
<div class="t" style="left:500.80px;top:301px;font-size:8.8px;color:#525d72;transform:scaleX(0.864);transform-origin:0 0;">VENDA</div>
<div class="t" style="left:707.50px;top:301px;font-size:8.8px;color:#525d72;transform:scaleX(0.847);transform-origin:0 0;">SERVIÇO/PRODUTO</div>
<div class="t" style="left:1030.00px;top:301px;font-size:8.8px;color:#525d72;transform:scaleX(0.852);transform-origin:0 0;">TIPO METAL</div>
<div class="t" style="left:1095.80px;top:301px;font-size:8.8px;color:#525d72;transform:scaleX(0.852);transform-origin:0 0;">PESO FINAL</div>
<div class="t" style="left:1160.50px;top:301px;font-size:8.8px;color:#525d72;transform:scaleX(0.852);transform-origin:0 0;">VALOR VENDA</div>
<div class="t" style="left:1236.80px;top:301px;font-size:8.8px;color:#525d72;transform:scaleX(0.852);transform-origin:0 0;">VALOR GRAMA</div>
<div class="t" style="left:1316.30px;top:301px;font-size:8.8px;color:#525d72;transform:scaleX(0.841);transform-origin:0 0;">PORCENTAGEM COMISSAO</div>
<div class="t" style="left:994.11px;top:301px;font-size:8.8px;color:#525d72;transform:scaleX(0.852);transform-origin:50% 0;">PAGO</div>
<div class="t" style="left:1460.79px;top:301px;font-size:8.8px;color:#525d72;transform:scaleX(0.852);transform-origin:50% 0;">COMISSÃO</div>
<div class="a" style="left:164px;top:317.0px;width:1416.5px;height:1px;background:#e3e7ed"></div>
<div class="a" style="left:164px;top:318.00px;width:1416.5px;height:26.68px;background:#f7f8fa"></div>
<div class="a" style="left:164px;top:344.18px;width:1416.5px;height:1px;background:#e3e7ed"></div>
<div class="cb" style="left:164.5px;top:326.60px"></div>
<div class="t" style="left:178.50px;top:327px;font-size:8.8px;color:#7f899d;transform:scaleX(0.926);transform-origin:0 0;">48189</div>
<div class="t" style="left:255.00px;top:327px;font-size:8.8px;color:#7f899d;transform:scaleX(0.841);transform-origin:0 0;">SILVIO FERNANDES BRAGA</div>
<div class="t" style="left:395.00px;top:327px;font-size:8.8px;color:#7f899d;transform:scaleX(0.926);transform-origin:0 0;">30/06/2025</div>
<div class="t" style="left:501.00px;top:327px;font-size:8.8px;color:#7f899d;transform:scaleX(0.853);transform-origin:0 0;">310 KEURE DOS SANTOS PRIMO</div>
<div class="t" style="left:707.50px;top:327px;font-size:8.8px;color:#7f899d;transform:scaleX(0.841);transform-origin:0 0;">BRINCOS BABY</div>
<div class="t" style="left:1030.00px;top:327px;font-size:8.8px;color:#7f899d;transform:scaleX(0.865);transform-origin:0 0;">OURO 18K</div>
<div class="t" style="left:1096.00px;top:327px;font-size:8.8px;color:#7f899d;transform:scaleX(0.909);transform-origin:0 0;">0,00 g</div>
<div class="t" style="left:1160.50px;top:327px;font-size:8.8px;color:#7f899d;transform:scaleX(0.915);transform-origin:0 0;">R$ 350,00</div>
<div class="t" style="left:1237.00px;top:327px;font-size:8.8px;color:#7f899d;transform:scaleX(0.918);transform-origin:0 0;">R$ 1.166,66</div>
<div class="t" style="left:1316.00px;top:327px;font-size:8.8px;color:#7f899d;transform:scaleX(0.926);transform-origin:0 0;">10,00 %</div>
<div class="badge" style="left:993px;top:325.20px"></div>
<div class="t" style="left:996.94px;top:327px;font-size:8.6px;color:#fff;font-weight:bold;transform:scaleX(0.919);transform-origin:50% 0;">NÃO</div>
<div class="t" style="left:1466.64px;top:327px;font-size:8.8px;color:#7f899d;transform:scaleX(0.914);transform-origin:50% 0;">R$ 35,00</div>
<div class="pg" style="left:1520px;top:322.40px;height:17.6px;width:42.7px"></div>
<svg class="a" style="left:1524px;top:326.80px" width="8" height="8" viewBox="0 0 8 8"><circle cx="4" cy="4" r="4" fill="#000"/><path d="M2 4.1 L3.4 5.5 L6 2.8" fill="none" stroke="#fff" stroke-width="1.1"/></svg>
<div class="t" style="left:1533.70px;top:327px;font-size:8.9px;color:#3b414d;transform:scaleX(0.813);transform-origin:0 0;">PAGAR</div>
<svg class="a" style="left:1569.6px;top:326.10px" width="7.5" height="8.5" viewBox="0 0 7.5 8.5"><rect x="0.2" y="0.9" width="7.1" height="1.3" rx="0.3" fill="#222"/><rect x="2.5" y="0" width="2.5" height="1.2" rx="0.3" fill="#222"/><path d="M0.9 2.7 H6.6 L6.1 8.5 H1.4 Z" fill="#222"/><path d="M2.8 3.6 V7.6 M4.7 3.6 V7.6" stroke="#6a6a6a" stroke-width="0.5"/></svg>
<div class="a" style="left:164px;top:345.18px;width:1416.5px;height:26.68px;background:#fff"></div>
<div class="a" style="left:164px;top:371.36px;width:1416.5px;height:1px;background:#e3e7ed"></div>
<div class="cb" style="left:164.5px;top:353.78px"></div>
<div class="t" style="left:178.50px;top:354px;font-size:8.8px;color:#7f899d;transform:scaleX(0.926);transform-origin:0 0;">41195</div>
<div class="t" style="left:255.00px;top:354px;font-size:8.8px;color:#7f899d;transform:scaleX(0.841);transform-origin:0 0;">SILVIO FERNANDES BRAGA</div>
<div class="t" style="left:395.00px;top:354px;font-size:8.8px;color:#7f899d;transform:scaleX(0.926);transform-origin:0 0;">20/06/2025</div>
<div class="t" style="left:501.00px;top:354px;font-size:8.8px;color:#7f899d;transform:scaleX(0.850);transform-origin:0 0;">286 MARCOS VINICIUS CIERI DE MOURA</div>
<div class="t" style="left:707.50px;top:354px;font-size:8.8px;color:#7f899d;transform:scaleX(0.841);transform-origin:0 0;">ANEL PERSONALIZADO</div>
<div class="t" style="left:1030.00px;top:354px;font-size:8.8px;color:#7f899d;transform:scaleX(0.865);transform-origin:0 0;">OURO 18K</div>
<div class="t" style="left:1096.00px;top:354px;font-size:8.8px;color:#7f899d;transform:scaleX(0.909);transform-origin:0 0;">2,00 g</div>
<div class="t" style="left:1160.50px;top:354px;font-size:8.8px;color:#7f899d;transform:scaleX(0.915);transform-origin:0 0;">R$ 550,00</div>
<div class="t" style="left:1237.00px;top:354px;font-size:8.8px;color:#7f899d;transform:scaleX(0.915);transform-origin:0 0;">R$ 316,09</div>
<div class="t" style="left:1316.00px;top:354px;font-size:8.8px;color:#7f899d;transform:scaleX(0.926);transform-origin:0 0;">18,00 %</div>
<div class="badge" style="left:993px;top:352.38px"></div>
<div class="t" style="left:996.94px;top:354px;font-size:8.6px;color:#fff;font-weight:bold;transform:scaleX(0.919);transform-origin:50% 0;">NÃO</div>
<div class="t" style="left:1466.64px;top:354px;font-size:8.8px;color:#7f899d;transform:scaleX(0.914);transform-origin:50% 0;">R$ 99,00</div>
<div class="pg" style="left:1520px;top:349.58px;height:17.6px;width:42.7px"></div>
<svg class="a" style="left:1524px;top:353.98px" width="8" height="8" viewBox="0 0 8 8"><circle cx="4" cy="4" r="4" fill="#000"/><path d="M2 4.1 L3.4 5.5 L6 2.8" fill="none" stroke="#fff" stroke-width="1.1"/></svg>
<div class="t" style="left:1533.70px;top:354px;font-size:8.9px;color:#3b414d;transform:scaleX(0.813);transform-origin:0 0;">PAGAR</div>
<svg class="a" style="left:1569.6px;top:353.28px" width="7.5" height="8.5" viewBox="0 0 7.5 8.5"><rect x="0.2" y="0.9" width="7.1" height="1.3" rx="0.3" fill="#222"/><rect x="2.5" y="0" width="2.5" height="1.2" rx="0.3" fill="#222"/><path d="M0.9 2.7 H6.6 L6.1 8.5 H1.4 Z" fill="#222"/><path d="M2.8 3.6 V7.6 M4.7 3.6 V7.6" stroke="#6a6a6a" stroke-width="0.5"/></svg>
<div class="a" style="left:164px;top:372.36px;width:1416.5px;height:26.68px;background:#f7f8fa"></div>
<div class="a" style="left:164px;top:398.54px;width:1416.5px;height:1px;background:#e3e7ed"></div>
<div class="cb" style="left:164.5px;top:380.96px"></div>
<div class="t" style="left:178.50px;top:381px;font-size:8.8px;color:#7f899d;transform:scaleX(0.926);transform-origin:0 0;">41182</div>
<div class="t" style="left:255.00px;top:381px;font-size:8.8px;color:#7f899d;transform:scaleX(0.841);transform-origin:0 0;">SILVIO FERNANDES BRAGA</div>
<div class="t" style="left:395.00px;top:381px;font-size:8.8px;color:#7f899d;transform:scaleX(0.926);transform-origin:0 0;">12/06/2025</div>
<div class="t" style="left:501.00px;top:381px;font-size:8.8px;color:#7f899d;transform:scaleX(0.853);transform-origin:0 0;">256 KEURE DOS SANTOS PRIMO</div>
<div class="t" style="left:707.50px;top:381px;font-size:8.8px;color:#7f899d;transform:scaleX(0.841);transform-origin:0 0;">GRAVAÇÃO</div>
<div class="t" style="left:1096.00px;top:381px;font-size:8.8px;color:#7f899d;transform:scaleX(0.912);transform-origin:0 0;">12,00 g</div>
<div class="t" style="left:1160.50px;top:381px;font-size:8.8px;color:#7f899d;transform:scaleX(0.915);transform-origin:0 0;">R$ 200,00</div>
<div class="t" style="left:1316.00px;top:381px;font-size:8.8px;color:#7f899d;transform:scaleX(0.926);transform-origin:0 0;">2,00 %</div>
<div class="badge" style="left:993px;top:379.56px"></div>
<div class="t" style="left:996.94px;top:381px;font-size:8.6px;color:#fff;font-weight:bold;transform:scaleX(0.919);transform-origin:50% 0;">NÃO</div>
<div class="t" style="left:1469.09px;top:381px;font-size:8.8px;color:#7f899d;transform:scaleX(0.912);transform-origin:50% 0;">R$ 4,00</div>
<div class="pg" style="left:1520px;top:376.76px;height:17.6px;width:42.7px"></div>
<svg class="a" style="left:1524px;top:381.16px" width="8" height="8" viewBox="0 0 8 8"><circle cx="4" cy="4" r="4" fill="#000"/><path d="M2 4.1 L3.4 5.5 L6 2.8" fill="none" stroke="#fff" stroke-width="1.1"/></svg>
<div class="t" style="left:1533.70px;top:381px;font-size:8.9px;color:#3b414d;transform:scaleX(0.813);transform-origin:0 0;">PAGAR</div>
<svg class="a" style="left:1569.6px;top:380.46px" width="7.5" height="8.5" viewBox="0 0 7.5 8.5"><rect x="0.2" y="0.9" width="7.1" height="1.3" rx="0.3" fill="#222"/><rect x="2.5" y="0" width="2.5" height="1.2" rx="0.3" fill="#222"/><path d="M0.9 2.7 H6.6 L6.1 8.5 H1.4 Z" fill="#222"/><path d="M2.8 3.6 V7.6 M4.7 3.6 V7.6" stroke="#6a6a6a" stroke-width="0.5"/></svg>
<div class="a" style="left:164px;top:399.54px;width:1416.5px;height:26.68px;background:#fff"></div>
<div class="a" style="left:164px;top:425.72px;width:1416.5px;height:1px;background:#e3e7ed"></div>
<div class="cb" style="left:164.5px;top:408.14px"></div>
<div class="t" style="left:178.50px;top:408px;font-size:8.8px;color:#7f899d;transform:scaleX(0.926);transform-origin:0 0;">41178</div>
<div class="t" style="left:255.00px;top:408px;font-size:8.8px;color:#7f899d;transform:scaleX(0.841);transform-origin:0 0;">SILVIO FERNANDES BRAGA</div>
<div class="t" style="left:395.00px;top:408px;font-size:8.8px;color:#7f899d;transform:scaleX(0.926);transform-origin:0 0;">11/06/2025</div>
<div class="t" style="left:501.00px;top:408px;font-size:8.8px;color:#7f899d;transform:scaleX(0.851);transform-origin:0 0;">284 ALDOAIRIANA ALFA DE ABREU</div>
<div class="t" style="left:707.50px;top:408px;font-size:8.8px;color:#7f899d;transform:scaleX(0.841);transform-origin:0 0;">PULSEIRA GRUMET</div>
<div class="t" style="left:1030.00px;top:408px;font-size:8.8px;color:#7f899d;transform:scaleX(0.873);transform-origin:0 0;">PRATA 950</div>
<div class="t" style="left:1096.00px;top:408px;font-size:8.8px;color:#7f899d;transform:scaleX(0.909);transform-origin:0 0;">3,00 g</div>
<div class="t" style="left:1160.50px;top:408px;font-size:8.8px;color:#7f899d;transform:scaleX(0.915);transform-origin:0 0;">R$ 466,00</div>
<div class="t" style="left:1237.00px;top:408px;font-size:8.8px;color:#7f899d;transform:scaleX(0.915);transform-origin:0 0;">R$ 155,33</div>
<div class="t" style="left:1316.00px;top:408px;font-size:8.8px;color:#7f899d;transform:scaleX(0.926);transform-origin:0 0;">18,00 %</div>
<div class="badge" style="left:993px;top:406.74px"></div>
<div class="t" style="left:996.94px;top:409px;font-size:8.6px;color:#fff;font-weight:bold;transform:scaleX(0.919);transform-origin:50% 0;">NÃO</div>
<div class="t" style="left:1466.64px;top:408px;font-size:8.8px;color:#7f899d;transform:scaleX(0.914);transform-origin:50% 0;">R$ 27,95</div>
<div class="pg" style="left:1520px;top:403.94px;height:17.6px;width:42.7px"></div>
<svg class="a" style="left:1524px;top:408.34px" width="8" height="8" viewBox="0 0 8 8"><circle cx="4" cy="4" r="4" fill="#000"/><path d="M2 4.1 L3.4 5.5 L6 2.8" fill="none" stroke="#fff" stroke-width="1.1"/></svg>
<div class="t" style="left:1533.70px;top:408px;font-size:8.9px;color:#3b414d;transform:scaleX(0.813);transform-origin:0 0;">PAGAR</div>
<svg class="a" style="left:1569.6px;top:407.64px" width="7.5" height="8.5" viewBox="0 0 7.5 8.5"><rect x="0.2" y="0.9" width="7.1" height="1.3" rx="0.3" fill="#222"/><rect x="2.5" y="0" width="2.5" height="1.2" rx="0.3" fill="#222"/><path d="M0.9 2.7 H6.6 L6.1 8.5 H1.4 Z" fill="#222"/><path d="M2.8 3.6 V7.6 M4.7 3.6 V7.6" stroke="#6a6a6a" stroke-width="0.5"/></svg>
<div class="a" style="left:164px;top:426.72px;width:1416.5px;height:26.68px;background:#f7f8fa"></div>
<div class="a" style="left:164px;top:452.90px;width:1416.5px;height:1px;background:#e3e7ed"></div>
<div class="cb" style="left:164.5px;top:435.32px"></div>
<div class="t" style="left:178.50px;top:436px;font-size:8.8px;color:#7f899d;transform:scaleX(0.926);transform-origin:0 0;">41180</div>
<div class="t" style="left:255.00px;top:436px;font-size:8.8px;color:#7f899d;transform:scaleX(0.841);transform-origin:0 0;">SILVIO FERNANDES BRAGA</div>
<div class="t" style="left:395.00px;top:436px;font-size:8.8px;color:#7f899d;transform:scaleX(0.926);transform-origin:0 0;">12/06/2025</div>
<div class="t" style="left:501.00px;top:436px;font-size:8.8px;color:#7f899d;transform:scaleX(0.856);transform-origin:0 0;">253 ANA PAULA SOARES</div>
<div class="t" style="left:707.50px;top:436px;font-size:8.8px;color:#7f899d;transform:scaleX(0.841);transform-origin:0 0;">ANEL PERSONALIZADO</div>
<div class="t" style="left:1030.00px;top:436px;font-size:8.8px;color:#7f899d;transform:scaleX(0.865);transform-origin:0 0;">OURO 18K</div>
<div class="t" style="left:1096.00px;top:436px;font-size:8.8px;color:#7f899d;transform:scaleX(0.909);transform-origin:0 0;">2,00 g</div>
<div class="t" style="left:1160.50px;top:436px;font-size:8.8px;color:#7f899d;transform:scaleX(0.918);transform-origin:0 0;">R$ 1.900,00</div>
<div class="t" style="left:1237.00px;top:436px;font-size:8.8px;color:#7f899d;transform:scaleX(0.915);transform-origin:0 0;">R$ 950,00</div>
<div class="t" style="left:1316.00px;top:436px;font-size:8.8px;color:#7f899d;transform:scaleX(0.926);transform-origin:0 0;">5,00 %</div>
<div class="badge" style="left:993px;top:433.92px"></div>
<div class="t" style="left:996.94px;top:436px;font-size:8.6px;color:#fff;font-weight:bold;transform:scaleX(0.919);transform-origin:50% 0;">NÃO</div>
<div class="t" style="left:1466.64px;top:436px;font-size:8.8px;color:#7f899d;transform:scaleX(0.914);transform-origin:50% 0;">R$ 47,50</div>
<div class="pg" style="left:1520px;top:431.12px;height:17.6px;width:42.7px"></div>
<svg class="a" style="left:1524px;top:435.52px" width="8" height="8" viewBox="0 0 8 8"><circle cx="4" cy="4" r="4" fill="#000"/><path d="M2 4.1 L3.4 5.5 L6 2.8" fill="none" stroke="#fff" stroke-width="1.1"/></svg>
<div class="t" style="left:1533.70px;top:436px;font-size:8.9px;color:#3b414d;transform:scaleX(0.813);transform-origin:0 0;">PAGAR</div>
<svg class="a" style="left:1569.6px;top:434.82px" width="7.5" height="8.5" viewBox="0 0 7.5 8.5"><rect x="0.2" y="0.9" width="7.1" height="1.3" rx="0.3" fill="#222"/><rect x="2.5" y="0" width="2.5" height="1.2" rx="0.3" fill="#222"/><path d="M0.9 2.7 H6.6 L6.1 8.5 H1.4 Z" fill="#222"/><path d="M2.8 3.6 V7.6 M4.7 3.6 V7.6" stroke="#6a6a6a" stroke-width="0.5"/></svg>
<div class="a" style="left:164px;top:453.90px;width:1416.5px;height:26.68px;background:#fff"></div>
<div class="a" style="left:164px;top:480.08px;width:1416.5px;height:1px;background:#e3e7ed"></div>
<div class="cb" style="left:164.5px;top:462.50px"></div>
<div class="t" style="left:178.50px;top:463px;font-size:8.8px;color:#7f899d;transform:scaleX(0.926);transform-origin:0 0;">41176</div>
<div class="t" style="left:255.00px;top:463px;font-size:8.8px;color:#7f899d;transform:scaleX(0.841);transform-origin:0 0;">SILVIO FERNANDES BRAGA</div>
<div class="t" style="left:395.00px;top:463px;font-size:8.8px;color:#7f899d;transform:scaleX(0.926);transform-origin:0 0;">11/06/2025</div>
<div class="t" style="left:501.00px;top:463px;font-size:8.8px;color:#7f899d;transform:scaleX(0.854);transform-origin:0 0;">248 JAIME ALVES LISBOA</div>
<div class="t" style="left:707.50px;top:463px;font-size:8.8px;color:#7f899d;transform:scaleX(0.841);transform-origin:0 0;">ALIANÇA PERSONALIZADA</div>
<div class="t" style="left:1030.00px;top:463px;font-size:8.8px;color:#7f899d;transform:scaleX(0.865);transform-origin:0 0;">OURO 18K</div>
<div class="t" style="left:1096.00px;top:463px;font-size:8.8px;color:#7f899d;transform:scaleX(0.909);transform-origin:0 0;">6,00 g</div>
<div class="t" style="left:1160.50px;top:463px;font-size:8.8px;color:#7f899d;transform:scaleX(0.918);transform-origin:0 0;">R$ 2.169,00</div>
<div class="t" style="left:1237.00px;top:463px;font-size:8.8px;color:#7f899d;transform:scaleX(0.915);transform-origin:0 0;">R$ 354,41</div>
<div class="t" style="left:1316.00px;top:463px;font-size:8.8px;color:#7f899d;transform:scaleX(0.926);transform-origin:0 0;">18,00 %</div>
<div class="badge" style="left:993px;top:461.10px"></div>
<div class="t" style="left:996.94px;top:463px;font-size:8.6px;color:#fff;font-weight:bold;transform:scaleX(0.919);transform-origin:50% 0;">NÃO</div>
<div class="t" style="left:1466.64px;top:463px;font-size:8.8px;color:#7f899d;transform:scaleX(0.914);transform-origin:50% 0;">R$ 63,79</div>
<div class="pg" style="left:1520px;top:458.30px;height:17.6px;width:42.7px"></div>
<svg class="a" style="left:1524px;top:462.70px" width="8" height="8" viewBox="0 0 8 8"><circle cx="4" cy="4" r="4" fill="#000"/><path d="M2 4.1 L3.4 5.5 L6 2.8" fill="none" stroke="#fff" stroke-width="1.1"/></svg>
<div class="t" style="left:1533.70px;top:463px;font-size:8.9px;color:#3b414d;transform:scaleX(0.813);transform-origin:0 0;">PAGAR</div>
<svg class="a" style="left:1569.6px;top:462.00px" width="7.5" height="8.5" viewBox="0 0 7.5 8.5"><rect x="0.2" y="0.9" width="7.1" height="1.3" rx="0.3" fill="#222"/><rect x="2.5" y="0" width="2.5" height="1.2" rx="0.3" fill="#222"/><path d="M0.9 2.7 H6.6 L6.1 8.5 H1.4 Z" fill="#222"/><path d="M2.8 3.6 V7.6 M4.7 3.6 V7.6" stroke="#6a6a6a" stroke-width="0.5"/></svg>
<div class="a" style="left:164px;top:481.08px;width:1416.5px;height:26.68px;background:#f7f8fa"></div>
<div class="a" style="left:164px;top:507.26px;width:1416.5px;height:1px;background:#e3e7ed"></div>
<div class="cb" style="left:164.5px;top:489.68px"></div>
<div class="t" style="left:178.50px;top:490px;font-size:8.8px;color:#7f899d;transform:scaleX(0.926);transform-origin:0 0;">39098</div>
<div class="t" style="left:255.00px;top:490px;font-size:8.8px;color:#7f899d;transform:scaleX(0.841);transform-origin:0 0;">SILVIO FERNANDES BRAGA</div>
<div class="t" style="left:395.00px;top:490px;font-size:8.8px;color:#7f899d;transform:scaleX(0.926);transform-origin:0 0;">09/06/2025</div>
<div class="t" style="left:501.00px;top:490px;font-size:8.8px;color:#7f899d;transform:scaleX(0.850);transform-origin:0 0;">239 SABRYNI STEFNE ALKIMIM MELO</div>
<div class="t" style="left:707.50px;top:490px;font-size:8.8px;color:#7f899d;transform:scaleX(0.841);transform-origin:0 0;">PINGENTE PERSONALIZADO</div>
<div class="t" style="left:1030.00px;top:490px;font-size:8.8px;color:#7f899d;transform:scaleX(0.865);transform-origin:0 0;">OURO 18K</div>
<div class="t" style="left:1096.00px;top:490px;font-size:8.8px;color:#7f899d;transform:scaleX(0.909);transform-origin:0 0;">4,00 g</div>
<div class="t" style="left:1160.50px;top:490px;font-size:8.8px;color:#7f899d;transform:scaleX(0.918);transform-origin:0 0;">R$ 1.008,00</div>
<div class="t" style="left:1237.00px;top:490px;font-size:8.8px;color:#7f899d;transform:scaleX(0.915);transform-origin:0 0;">R$ 280,00</div>
<div class="t" style="left:1316.00px;top:490px;font-size:8.8px;color:#7f899d;transform:scaleX(0.926);transform-origin:0 0;">18,00 %</div>
<div class="badge" style="left:993px;top:488.28px"></div>
<div class="t" style="left:996.94px;top:490px;font-size:8.6px;color:#fff;font-weight:bold;transform:scaleX(0.919);transform-origin:50% 0;">NÃO</div>
<div class="t" style="left:1466.64px;top:490px;font-size:8.8px;color:#7f899d;transform:scaleX(0.914);transform-origin:50% 0;">R$ 50,40</div>
<div class="pg" style="left:1520px;top:485.48px;height:17.6px;width:42.7px"></div>
<svg class="a" style="left:1524px;top:489.88px" width="8" height="8" viewBox="0 0 8 8"><circle cx="4" cy="4" r="4" fill="#000"/><path d="M2 4.1 L3.4 5.5 L6 2.8" fill="none" stroke="#fff" stroke-width="1.1"/></svg>
<div class="t" style="left:1533.70px;top:490px;font-size:8.9px;color:#3b414d;transform:scaleX(0.813);transform-origin:0 0;">PAGAR</div>
<svg class="a" style="left:1569.6px;top:489.18px" width="7.5" height="8.5" viewBox="0 0 7.5 8.5"><rect x="0.2" y="0.9" width="7.1" height="1.3" rx="0.3" fill="#222"/><rect x="2.5" y="0" width="2.5" height="1.2" rx="0.3" fill="#222"/><path d="M0.9 2.7 H6.6 L6.1 8.5 H1.4 Z" fill="#222"/><path d="M2.8 3.6 V7.6 M4.7 3.6 V7.6" stroke="#6a6a6a" stroke-width="0.5"/></svg>
<div class="a" style="left:164px;top:508.26px;width:1416.5px;height:26.68px;background:#fff"></div>
<div class="a" style="left:164px;top:534.44px;width:1416.5px;height:1px;background:#e3e7ed"></div>
<div class="cb" style="left:164.5px;top:516.86px"></div>
<div class="t" style="left:178.50px;top:517px;font-size:8.8px;color:#7f899d;transform:scaleX(0.926);transform-origin:0 0;">41166</div>
<div class="t" style="left:255.00px;top:517px;font-size:8.8px;color:#7f899d;transform:scaleX(0.841);transform-origin:0 0;">SILVIO FERNANDES BRAGA</div>
<div class="t" style="left:395.00px;top:517px;font-size:8.8px;color:#7f899d;transform:scaleX(0.926);transform-origin:0 0;">18/06/2025</div>
<div class="t" style="left:501.00px;top:517px;font-size:8.8px;color:#7f899d;transform:scaleX(0.850);transform-origin:0 0;">225 MAGDA MARINETH SILVA SANTOS</div>
<div class="t" style="left:707.50px;top:517px;font-size:8.8px;color:#7f899d;transform:scaleX(0.841);transform-origin:0 0;">CORRENTE E PINGENTE</div>
<div class="t" style="left:1030.00px;top:517px;font-size:8.8px;color:#7f899d;transform:scaleX(0.865);transform-origin:0 0;">OURO 18K</div>
<div class="t" style="left:1096.00px;top:517px;font-size:8.8px;color:#7f899d;transform:scaleX(0.909);transform-origin:0 0;">4,00 g</div>
<div class="t" style="left:1160.50px;top:517px;font-size:8.8px;color:#7f899d;transform:scaleX(0.915);transform-origin:0 0;">R$ 650,00</div>
<div class="t" style="left:1237.00px;top:517px;font-size:8.8px;color:#7f899d;transform:scaleX(0.915);transform-origin:0 0;">R$ 161,29</div>
<div class="t" style="left:1316.00px;top:517px;font-size:8.8px;color:#7f899d;transform:scaleX(0.926);transform-origin:0 0;">18,00 %</div>
<div class="badge" style="left:993px;top:515.46px"></div>
<div class="t" style="left:996.94px;top:517px;font-size:8.6px;color:#fff;font-weight:bold;transform:scaleX(0.919);transform-origin:50% 0;">NÃO</div>
<div class="t" style="left:1466.64px;top:517px;font-size:8.8px;color:#7f899d;transform:scaleX(0.914);transform-origin:50% 0;">R$ 29,03</div>
<div class="pg" style="left:1520px;top:512.66px;height:17.6px;width:42.7px"></div>
<svg class="a" style="left:1524px;top:517.06px" width="8" height="8" viewBox="0 0 8 8"><circle cx="4" cy="4" r="4" fill="#000"/><path d="M2 4.1 L3.4 5.5 L6 2.8" fill="none" stroke="#fff" stroke-width="1.1"/></svg>
<div class="t" style="left:1533.70px;top:517px;font-size:8.9px;color:#3b414d;transform:scaleX(0.813);transform-origin:0 0;">PAGAR</div>
<svg class="a" style="left:1569.6px;top:516.36px" width="7.5" height="8.5" viewBox="0 0 7.5 8.5"><rect x="0.2" y="0.9" width="7.1" height="1.3" rx="0.3" fill="#222"/><rect x="2.5" y="0" width="2.5" height="1.2" rx="0.3" fill="#222"/><path d="M0.9 2.7 H6.6 L6.1 8.5 H1.4 Z" fill="#222"/><path d="M2.8 3.6 V7.6 M4.7 3.6 V7.6" stroke="#6a6a6a" stroke-width="0.5"/></svg>
<div class="a" style="left:164px;top:535.44px;width:1416.5px;height:26.68px;background:#f7f8fa"></div>
<div class="a" style="left:164px;top:561.62px;width:1416.5px;height:1px;background:#e3e7ed"></div>
<div class="cb" style="left:164.5px;top:544.04px"></div>
<div class="t" style="left:178.50px;top:544px;font-size:8.8px;color:#7f899d;transform:scaleX(0.926);transform-origin:0 0;">41165</div>
<div class="t" style="left:255.00px;top:544px;font-size:8.8px;color:#7f899d;transform:scaleX(0.841);transform-origin:0 0;">SILVIO FERNANDES BRAGA</div>
<div class="t" style="left:395.00px;top:544px;font-size:8.8px;color:#7f899d;transform:scaleX(0.926);transform-origin:0 0;">03/06/2025</div>
<div class="t" style="left:501.00px;top:544px;font-size:8.8px;color:#7f899d;transform:scaleX(0.850);transform-origin:0 0;">221 ANA CLAUDIA DE FREITAS PIMENTA</div>
<div class="t" style="left:707.50px;top:544px;font-size:8.8px;color:#7f899d;transform:scaleX(0.841);transform-origin:0 0;">ALIANÇA ABAULADA</div>
<div class="t" style="left:1030.00px;top:544px;font-size:8.8px;color:#7f899d;transform:scaleX(0.865);transform-origin:0 0;">OURO 18K</div>
<div class="t" style="left:1096.00px;top:544px;font-size:8.8px;color:#7f899d;transform:scaleX(0.909);transform-origin:0 0;">4,00 g</div>
<div class="t" style="left:1160.50px;top:544px;font-size:8.8px;color:#7f899d;transform:scaleX(0.918);transform-origin:0 0;">R$ 2.875,00</div>
<div class="t" style="left:1237.00px;top:544px;font-size:8.8px;color:#7f899d;transform:scaleX(0.915);transform-origin:0 0;">R$ 718,75</div>
<div class="t" style="left:1316.00px;top:544px;font-size:8.8px;color:#7f899d;transform:scaleX(0.926);transform-origin:0 0;">18,00 %</div>
<div class="badge" style="left:993px;top:542.64px"></div>
<div class="t" style="left:996.94px;top:545px;font-size:8.6px;color:#fff;font-weight:bold;transform:scaleX(0.919);transform-origin:50% 0;">NÃO</div>
<div class="t" style="left:1464.20px;top:544px;font-size:8.8px;color:#7f899d;transform:scaleX(0.915);transform-origin:50% 0;">R$ 129,37</div>
<div class="pg" style="left:1520px;top:539.84px;height:17.6px;width:42.7px"></div>
<svg class="a" style="left:1524px;top:544.24px" width="8" height="8" viewBox="0 0 8 8"><circle cx="4" cy="4" r="4" fill="#000"/><path d="M2 4.1 L3.4 5.5 L6 2.8" fill="none" stroke="#fff" stroke-width="1.1"/></svg>
<div class="t" style="left:1533.70px;top:544px;font-size:8.9px;color:#3b414d;transform:scaleX(0.813);transform-origin:0 0;">PAGAR</div>
<svg class="a" style="left:1569.6px;top:543.54px" width="7.5" height="8.5" viewBox="0 0 7.5 8.5"><rect x="0.2" y="0.9" width="7.1" height="1.3" rx="0.3" fill="#222"/><rect x="2.5" y="0" width="2.5" height="1.2" rx="0.3" fill="#222"/><path d="M0.9 2.7 H6.6 L6.1 8.5 H1.4 Z" fill="#222"/><path d="M2.8 3.6 V7.6 M4.7 3.6 V7.6" stroke="#6a6a6a" stroke-width="0.5"/></svg>
<div class="a" style="left:164px;top:562.62px;width:1416.5px;height:26.68px;background:#fff"></div>
<div class="a" style="left:164px;top:588.80px;width:1416.5px;height:1px;background:#e3e7ed"></div>
<div class="cb" style="left:164.5px;top:571.22px"></div>
<div class="t" style="left:178.50px;top:571px;font-size:8.8px;color:#7f899d;transform:scaleX(0.926);transform-origin:0 0;">39048</div>
<div class="t" style="left:255.00px;top:571px;font-size:8.8px;color:#7f899d;transform:scaleX(0.841);transform-origin:0 0;">SILVIO FERNANDES BRAGA</div>
<div class="t" style="left:395.00px;top:571px;font-size:8.8px;color:#7f899d;transform:scaleX(0.926);transform-origin:0 0;">20/06/2025</div>
<div class="t" style="left:501.00px;top:571px;font-size:8.8px;color:#7f899d;transform:scaleX(0.850);transform-origin:0 0;">101 ANDRÉA CRISTINA ELIAS SOUSA</div>
<div class="t" style="left:707.50px;top:571px;font-size:8.8px;color:#7f899d;transform:scaleX(0.841);transform-origin:0 0;">ANEL PERSONALIZADO</div>
<div class="t" style="left:1030.00px;top:571px;font-size:8.8px;color:#7f899d;transform:scaleX(0.865);transform-origin:0 0;">OURO 18K</div>
<div class="t" style="left:1096.00px;top:571px;font-size:8.8px;color:#7f899d;transform:scaleX(0.909);transform-origin:0 0;">3,00 g</div>
<div class="t" style="left:1160.50px;top:571px;font-size:8.8px;color:#7f899d;transform:scaleX(0.918);transform-origin:0 0;">R$ 3.300,00</div>
<div class="t" style="left:1237.00px;top:571px;font-size:8.8px;color:#7f899d;transform:scaleX(0.918);transform-origin:0 0;">R$ 1.245,28</div>
<div class="t" style="left:1316.00px;top:571px;font-size:8.8px;color:#7f899d;transform:scaleX(0.926);transform-origin:0 0;">10,00 %</div>
<div class="badge" style="left:993px;top:569.82px"></div>
<div class="t" style="left:996.94px;top:572px;font-size:8.6px;color:#fff;font-weight:bold;transform:scaleX(0.919);transform-origin:50% 0;">NÃO</div>
<div class="t" style="left:1464.20px;top:571px;font-size:8.8px;color:#7f899d;transform:scaleX(0.915);transform-origin:50% 0;">R$ 124,52</div>
<div class="pg" style="left:1520px;top:567.02px;height:17.6px;width:42.7px"></div>
<svg class="a" style="left:1524px;top:571.42px" width="8" height="8" viewBox="0 0 8 8"><circle cx="4" cy="4" r="4" fill="#000"/><path d="M2 4.1 L3.4 5.5 L6 2.8" fill="none" stroke="#fff" stroke-width="1.1"/></svg>
<div class="t" style="left:1533.70px;top:571px;font-size:8.9px;color:#3b414d;transform:scaleX(0.813);transform-origin:0 0;">PAGAR</div>
<svg class="a" style="left:1569.6px;top:570.72px" width="7.5" height="8.5" viewBox="0 0 7.5 8.5"><rect x="0.2" y="0.9" width="7.1" height="1.3" rx="0.3" fill="#222"/><rect x="2.5" y="0" width="2.5" height="1.2" rx="0.3" fill="#222"/><path d="M0.9 2.7 H6.6 L6.1 8.5 H1.4 Z" fill="#222"/><path d="M2.8 3.6 V7.6 M4.7 3.6 V7.6" stroke="#6a6a6a" stroke-width="0.5"/></svg>
<div class="a" style="left:164px;top:589.80px;width:1416.5px;height:26.68px;background:#f7f8fa"></div>
<div class="a" style="left:164px;top:615.98px;width:1416.5px;height:1px;background:#e3e7ed"></div>
<div class="cb" style="left:164.5px;top:598.40px"></div>
<div class="t" style="left:178.50px;top:599px;font-size:8.8px;color:#7f899d;transform:scaleX(0.926);transform-origin:0 0;">41181</div>
<div class="t" style="left:255.00px;top:599px;font-size:8.8px;color:#7f899d;transform:scaleX(0.841);transform-origin:0 0;">GIULIANO LOPES RIBEIRO</div>
<div class="t" style="left:395.00px;top:599px;font-size:8.8px;color:#7f899d;transform:scaleX(0.926);transform-origin:0 0;">14/06/2025</div>
<div class="t" style="left:501.00px;top:599px;font-size:8.8px;color:#7f899d;transform:scaleX(0.852);transform-origin:0 0;">255 LUANA RODRIGUES MARTINS</div>
<div class="t" style="left:707.50px;top:599px;font-size:8.8px;color:#7f899d;transform:scaleX(0.841);transform-origin:0 0;">REPOSIÇÃO DE PEDRA NA ALIANÇA</div>
<div class="t" style="left:1096.00px;top:599px;font-size:8.8px;color:#7f899d;transform:scaleX(0.909);transform-origin:0 0;">0,00 g</div>
<div class="t" style="left:1160.50px;top:599px;font-size:8.8px;color:#7f899d;transform:scaleX(0.914);transform-origin:0 0;">R$ 50,00</div>
<div class="t" style="left:1316.00px;top:599px;font-size:8.8px;color:#7f899d;transform:scaleX(0.926);transform-origin:0 0;">0,00 %</div>
<div class="badge" style="left:993px;top:597.00px"></div>
<div class="t" style="left:996.94px;top:599px;font-size:8.6px;color:#fff;font-weight:bold;transform:scaleX(0.919);transform-origin:50% 0;">NÃO</div>
<div class="t" style="left:1469.09px;top:599px;font-size:8.8px;color:#7f899d;transform:scaleX(0.912);transform-origin:50% 0;">R$ 0,00</div>
<div class="pg" style="left:1520px;top:594.20px;height:17.6px;width:42.7px"></div>
<svg class="a" style="left:1524px;top:598.60px" width="8" height="8" viewBox="0 0 8 8"><circle cx="4" cy="4" r="4" fill="#000"/><path d="M2 4.1 L3.4 5.5 L6 2.8" fill="none" stroke="#fff" stroke-width="1.1"/></svg>
<div class="t" style="left:1533.70px;top:599px;font-size:8.9px;color:#3b414d;transform:scaleX(0.813);transform-origin:0 0;">PAGAR</div>
<svg class="a" style="left:1569.6px;top:597.90px" width="7.5" height="8.5" viewBox="0 0 7.5 8.5"><rect x="0.2" y="0.9" width="7.1" height="1.3" rx="0.3" fill="#222"/><rect x="2.5" y="0" width="2.5" height="1.2" rx="0.3" fill="#222"/><path d="M0.9 2.7 H6.6 L6.1 8.5 H1.4 Z" fill="#222"/><path d="M2.8 3.6 V7.6 M4.7 3.6 V7.6" stroke="#6a6a6a" stroke-width="0.5"/></svg>
<div class="a" style="left:164px;top:616.98px;width:1416.5px;height:26.68px;background:#fff"></div>
<div class="a" style="left:164px;top:643.16px;width:1416.5px;height:1px;background:#e3e7ed"></div>
<div class="cb" style="left:164.5px;top:625.58px"></div>
<div class="t" style="left:178.50px;top:626px;font-size:8.8px;color:#7f899d;transform:scaleX(0.926);transform-origin:0 0;">41181</div>
<div class="t" style="left:255.00px;top:626px;font-size:8.8px;color:#7f899d;transform:scaleX(0.841);transform-origin:0 0;">GIULIANO LOPES RIBEIRO</div>
<div class="t" style="left:395.00px;top:626px;font-size:8.8px;color:#7f899d;transform:scaleX(0.926);transform-origin:0 0;">14/06/2025</div>
<div class="t" style="left:501.00px;top:626px;font-size:8.8px;color:#7f899d;transform:scaleX(0.852);transform-origin:0 0;">255 LUANA RODRIGUES MARTINS</div>
<div class="t" style="left:707.50px;top:626px;font-size:8.8px;color:#7f899d;transform:scaleX(0.841);transform-origin:0 0;">POLIMENTO PULSEIRA BABY</div>
<div class="t" style="left:1096.00px;top:626px;font-size:8.8px;color:#7f899d;transform:scaleX(0.909);transform-origin:0 0;">0,00 g</div>
<div class="t" style="left:1160.50px;top:626px;font-size:8.8px;color:#7f899d;transform:scaleX(0.914);transform-origin:0 0;">R$ 50,00</div>
<div class="t" style="left:1316.00px;top:626px;font-size:8.8px;color:#7f899d;transform:scaleX(0.926);transform-origin:0 0;">0,00 %</div>
<div class="badge" style="left:993px;top:624.18px"></div>
<div class="t" style="left:996.94px;top:626px;font-size:8.6px;color:#fff;font-weight:bold;transform:scaleX(0.919);transform-origin:50% 0;">NÃO</div>
<div class="t" style="left:1469.09px;top:626px;font-size:8.8px;color:#7f899d;transform:scaleX(0.912);transform-origin:50% 0;">R$ 0,00</div>
<div class="pg" style="left:1520px;top:621.38px;height:17.6px;width:42.7px"></div>
<svg class="a" style="left:1524px;top:625.78px" width="8" height="8" viewBox="0 0 8 8"><circle cx="4" cy="4" r="4" fill="#000"/><path d="M2 4.1 L3.4 5.5 L6 2.8" fill="none" stroke="#fff" stroke-width="1.1"/></svg>
<div class="t" style="left:1533.70px;top:626px;font-size:8.9px;color:#3b414d;transform:scaleX(0.813);transform-origin:0 0;">PAGAR</div>
<svg class="a" style="left:1569.6px;top:625.08px" width="7.5" height="8.5" viewBox="0 0 7.5 8.5"><rect x="0.2" y="0.9" width="7.1" height="1.3" rx="0.3" fill="#222"/><rect x="2.5" y="0" width="2.5" height="1.2" rx="0.3" fill="#222"/><path d="M0.9 2.7 H6.6 L6.1 8.5 H1.4 Z" fill="#222"/><path d="M2.8 3.6 V7.6 M4.7 3.6 V7.6" stroke="#6a6a6a" stroke-width="0.5"/></svg>
</body></html>
